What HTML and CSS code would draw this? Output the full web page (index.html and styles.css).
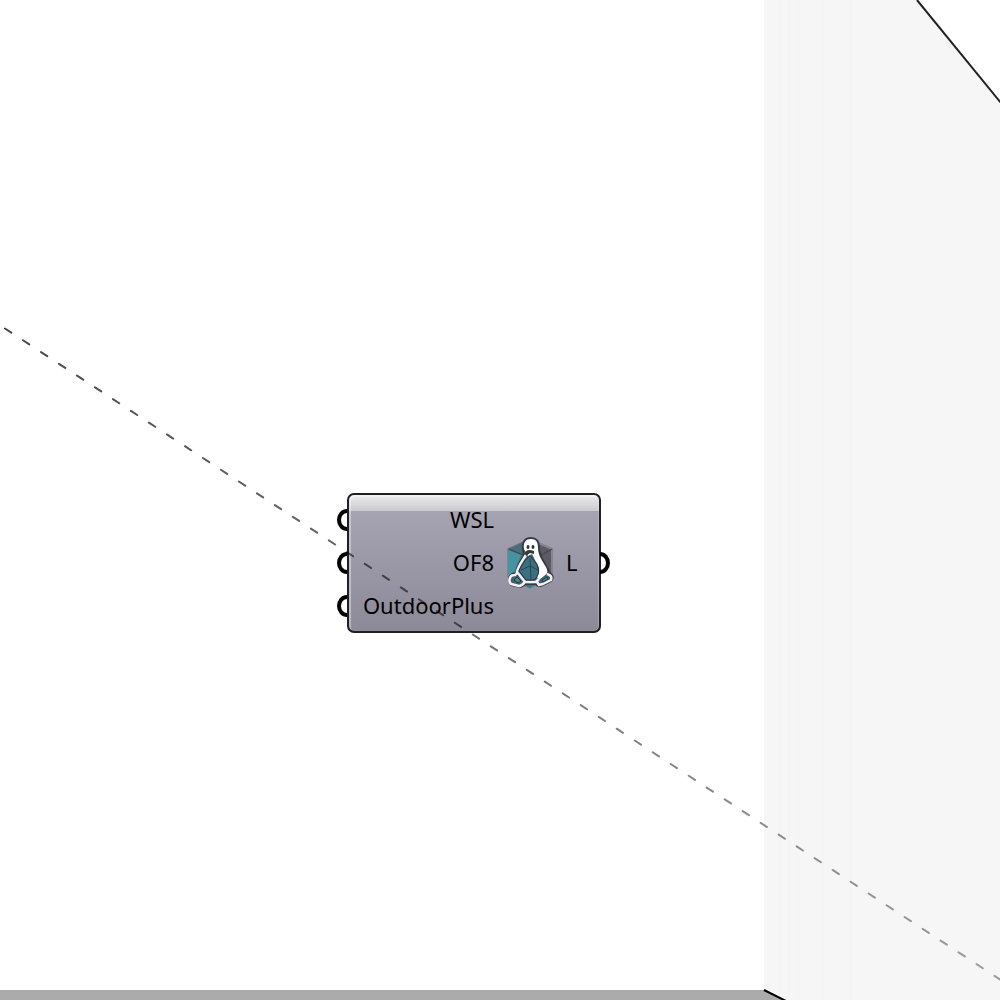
FILE: index.html
```
<!DOCTYPE html>
<html lang="en">
<head>
<meta charset="utf-8">
<title>Component canvas</title>
<link rel="stylesheet" href="styles.css">
</head>
<body>
<main class="canvas">
  <svg class="backdrop" aria-hidden="true">
    <path d="M764 0H917L1000 102V1000H784L764 990Z" fill="#f6f6f6"/>
    <path d="M779 0h1V998h-1ZM788 0h2V1000h-2ZM798 0h1V1000h-1ZM822 0h2V1000h-2ZM850 0h2V1000h-2Z" fill="#f4f4f4"/>
    <path d="M0 990H764L784 1000H0Z" fill="#ababab"/>
    <path d="M917 0L1001 103" fill="none" stroke="#202020" stroke-width="2"/>
    <path d="M764 990L786 1001" fill="none" stroke="#000" stroke-width="2"/>
  </svg>

  <section class="node">
    <ul class="ports inputs">
      <li class="port">WSL</li>
      <li class="port">OF8</li>
      <li class="port">OutdoorPlus</li>
    </ul>
    <svg class="icon" viewBox="0 0 50 54" aria-hidden="true">
      <path d="M25 3L47 13V41L25 52L3 41V13Z" fill="#5b5a66" stroke="#85838f" stroke-width="2"/>
      <path d="M3 13L20 5L25 27L25 52L3 41Z" fill="#4a6d7a"/>
      <path d="M3 14L16 19L9 37L3 41Z" fill="#4593a3"/>
      <path d="M4 13L18 19M31 5L35 20L47 13M35 20L47 39" fill="none" stroke="#3c424c" stroke-width="1"/>
      <path d="M18 13C17 6 20 2 26 2C32 2 34 6 34 12C34 18 37 23 40 28C43 33 44 35 43 37C48 38 49 42 46 45L38 49C35 51 32 50 31 48C27 49 23 49 20 48C18 51 14 51 11 50L6 49C4 47 3 42 6 39C8 36 10 38 12 39C10 33 15 26 19 20Z" fill="#3c6370" stroke="#3a3b41" stroke-width="2"/>
      <path d="M19 13C18 6 21 3 26 3C31 3 33 6 33 12C33 18 36 23 39 28C43 34 44 37 39 40L34 44L32 41C36 35 34 30 31 26L27 18L23 20Z" fill="#fff"/>
      <path d="M21 19C18 24 13 30 12 36L20 46H31L34 43M12 37C10 41 8 38 6 40C4 43 4 46 6 48L14 50C17 50 19 47 20 46M32 46L34 49L38 48L46 44C47 41 46 39 42 38" fill="none" stroke="#f2f2f3" stroke-width="2.5" stroke-linejoin="round"/>
      <path d="M25 20C21 22 16 30 14 35L21 44H29C34 40 35 34 31 27Z" fill="#3c7080" stroke="#2c3138" stroke-width="1"/>
      <path d="M25 22L26 44M16 34L25 30L33 34" fill="none" stroke="#294350" stroke-width="1"/>
      <path d="M9 44L12 41L16 45L13 47ZM37 44L42 41L43 43L38 46Z" fill="#478492" stroke="#30383e" stroke-width="1"/>
      <path d="M21 49L25 52L29 49Z" fill="#268096"/>
      <path d="M20 17C21 14 24 13 29 15L29 18L25 17L21 20Z" fill="#38373b"/>
      <ellipse cx="23" cy="11" rx="1.5" ry="2" fill="#333"/>
      <ellipse cx="28" cy="11" rx="1.5" ry="2" fill="#333"/>
    </svg>
    <ul class="ports outputs">
      <li class="port">L</li>
    </ul>
  </section>

  <svg class="guide" aria-hidden="true">
    <defs>
      <linearGradient id="fade" gradientUnits="userSpaceOnUse" x1="0" y1="326" x2="1000" y2="980">
        <stop offset="0" stop-color="#000" stop-opacity=".72"/>
        <stop offset="1" stop-color="#000" stop-opacity=".36"/>
      </linearGradient>
    </defs>
    <path d="M5 328.5L1004.5 982.4" fill="none" stroke="url(#fade)" stroke-width="2" stroke-linecap="round" stroke-dasharray="7.5 14"/>
  </svg>
</main>
</body>
</html>
```
FILE: styles.css
```
*,
*::before,
*::after {
  box-sizing: border-box;
}

body {
  margin: 0;
  background: #fff;
  color: #000;
  font-family: "Noto Sans", "Open Sans", sans-serif;
  font-size: 22px;
  line-height: 43px;
}

.canvas {
  position: relative;
  min-height: 100vh;
  overflow: hidden;
}

.backdrop,
.guide {
  position: absolute;
  inset: 0;
  width: 100%;
  height: 100%;
  pointer-events: none;
}

.node {
  position: absolute;
  left: 347px;
  top: 493px;
  display: flex;
  align-items: center;
  width: 254px;
  height: 140px;
  padding: 0 0 1px 1px;
  border: 2px solid #202022;
  border-radius: 7px;
  background:
    linear-gradient(#ececee, #c9c9d0) 0 0 / 100% 16px no-repeat,
    linear-gradient(#a9a7b5, #8c8a98);
  box-shadow: inset 2px 2px 1px #ffffff66, inset -1px 0 1px #ffffff33;
}

.ports {
  flex: none;
  margin: 0;
  padding: 0;
  list-style: none;
}

.inputs {
  width: 144px;
  text-align: right;
}

.outputs {
  flex: 1;
  padding-left: 11px;
}

.port {
  height: 43px;
}

.inputs .port::before,
.outputs .port::after {
  content: "";
  position: absolute;
  width: 10px;
  height: 22px;
  margin-top: 11px;
  border: 4px solid #000;
}

.inputs .port::before {
  left: -12px;
  border-right: 0;
  border-radius: 10px 0 0 10px / 11px 0 0 11px;
}

.outputs .port::after {
  right: -11px;
  border-left: 0;
  border-radius: 0 10px 10px 0 / 0 11px 11px 0;
}

.icon {
  flex: none;
  width: 50px;
  height: 54px;
  margin-left: 11px;
}
```
